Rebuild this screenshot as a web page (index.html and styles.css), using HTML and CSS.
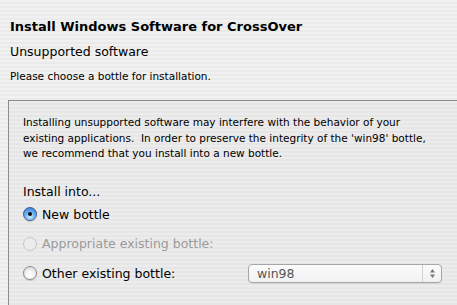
FILE: index.html
```html
<!DOCTYPE html>
<html lang="en">
<head>
    <meta charset="UTF-8">
    <title>Install Windows Software for CrossOver</title>
    <link rel="stylesheet" href="styles.css">
</head>
<body>
    <div id="header">
        <div class="title">Install Windows Software for CrossOver</div>
        <div class="subtitle">Unsupported software</div>
        <div class="hint">Please choose a bottle for installation.</div>
    </div>

    <div id="panel">
        <p class="warning">Installing unsupported software may interfere with the behavior of your<br>
            existing applications.&nbsp; In order to preserve the integrity of the 'win98' bottle,<br>
            we recommend that you install into a new bottle.</p>

        <div class="install_label">Install into...</div>

        <div class="options">
            <div class="option">
                <span class="radio radio_on"></span>
                <span>New bottle</span>
            </div>
            <div class="option disabled">
                <span class="radio"></span>
                <span>Appropriate existing bottle:</span>
            </div>
            <div class="option">
                <span class="radio"></span>
                <span class="option_text">Other existing bottle:</span>
                <div class="popup">
                    <span>win98</span>
                    <span class="arrows">
                        <svg width="7" height="11" viewBox="0 0 7 11">
                            <path d="M3.5 1 L6 4.5 L1 4.5 Z" fill="#777" />
                            <path d="M3.5 10 L6 6.5 L1 6.5 Z" fill="#777" />
                        </svg>
                    </span>
                </div>
            </div>
        </div>
    </div>
</body>
</html>
```

FILE: styles.css
```css
* {
    box-sizing: border-box;
}

html,
body {
    margin: 0;
    padding: 0;
    height: 100%;
    overflow: hidden;
}

body {
    font-family: "DejaVu Sans", "Liberation Sans", sans-serif;
    color: #000;
    background-color: #eeeeee;
    background-image: repeating-linear-gradient(to bottom, #f1f1f1 0, #f1f1f1 2px, #eaeaea 2px, #eaeaea 4px);
    display: flex;
    flex-direction: column;
}

#header {
    padding: 19px 0 0 10px;
}

.title {
    font-size: 13px;
    font-weight: bold;
    height: 22px;
}

.subtitle {
    font-size: 12.5px;
    margin-top: 3px;
    height: 26px;
}

.hint {
    font-size: 10.5px;
    height: 20px;
}

#panel {
    flex: 1;
    margin: 10px 0 0 8px;
    border-top: 1px solid #8c8c8c;
    border-left: 1px solid #8c8c8c;
    padding: 14px 0 0 14px;
    background-image: repeating-linear-gradient(to bottom, #ececec 0, #ececec 2px, #e6e6e6 2px, #e6e6e6 4px);
}

.warning {
    margin: 0;
    font-size: 10.5px;
    line-height: 15.5px;
    white-space: nowrap;
}

.install_label {
    margin-top: 22px;
    font-size: 12.5px;
}

.options {
    display: flex;
    flex-direction: column;
    gap: 14.5px;
    margin-top: 8px;
}

.option {
    display: flex;
    align-items: center;
    gap: 5px;
    font-size: 12.5px;
    height: 15px;
}

.option.disabled {
    color: #9a9a9a;
}

.radio {
    width: 14px;
    height: 14px;
    border-radius: 50%;
    border: 1px solid #8a8a8a;
    background: radial-gradient(circle at 50% 70%, #ffffff 0, #f4f4f4 40%, #cfcfcf 100%);
    box-shadow: 0 1px 1px rgba(0, 0, 0, 0.15);
    display: inline-flex;
    align-items: center;
    justify-content: center;
}

.disabled .radio {
    border-color: #c6c6c6;
    background: #ececec;
    box-shadow: none;
}

.radio_on {
    border-color: #3a5f9c;
    background: radial-gradient(circle at 50% 75%, #c8ecff 0, #6fb3f0 45%, #2d6fce 100%);
}

.radio_on::after {
    content: "";
    width: 4px;
    height: 4px;
    border-radius: 50%;
    background: #111;
}

.option_text {
    width: 201px;
}

.popup {
    width: 194px;
    height: 19px;
    border: 1px solid #a6a6a6;
    border-radius: 4px;
    background: linear-gradient(to bottom, #fbfbfb, #f1f1f1);
    display: flex;
    align-items: center;
    justify-content: space-between;
    padding-left: 8px;
    color: #555;
    font-size: 12.5px;
    box-shadow: 0 1px 1px rgba(0, 0, 0, 0.08);
}

.arrows {
    width: 19px;
    height: 100%;
    border-left: 1px solid #d2d2d2;
    display: flex;
    align-items: center;
    justify-content: center;
}
```
